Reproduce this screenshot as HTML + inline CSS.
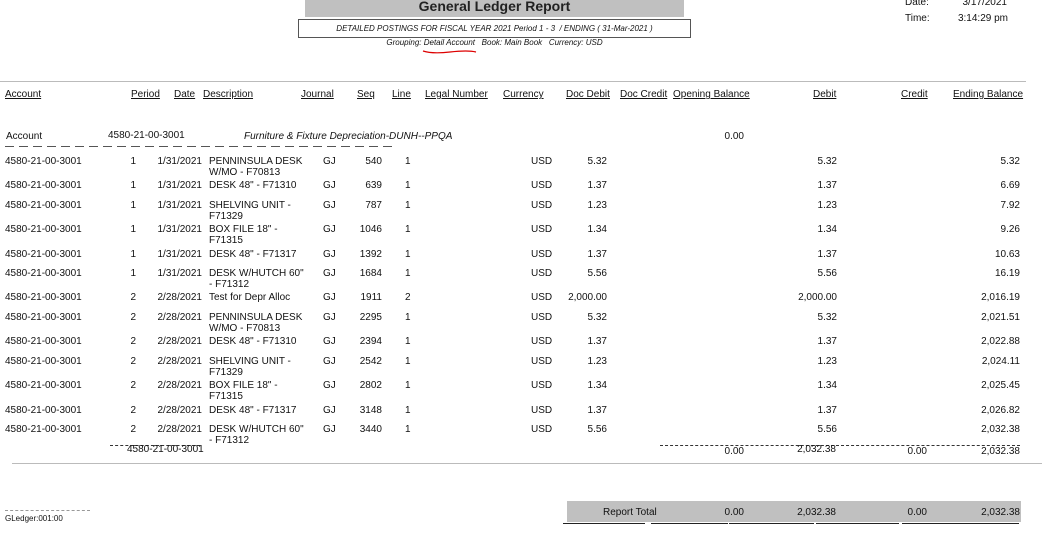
<!DOCTYPE html>
<html><head><meta charset="utf-8"><style>
body{margin:0;width:1061px;height:542px;background:#fff;position:relative;overflow:hidden;font-family:"Liberation Sans Narrow","Liberation Sans",sans-serif;font-size:10px;color:#111;}
div,span{position:absolute;white-space:nowrap;}
#w{left:0;top:2px;width:1061px;height:540px;}
.h{top:87px;text-decoration:underline;}
.r{left:0;width:1061px;height:24px;}
.r span{top:0;line-height:11px;}
.a{left:5px}.p{right:925px}.d{right:859px}.ds{left:209px;white-space:normal!important;width:96px}
.j{left:323px}.s{right:679px}.l{left:405px}.c{left:531px}.dd{right:454px}.db{right:224px}.e{right:41px}
.dash{border-top:1px dashed #333;height:0}
.ld{height:1px;background:repeating-linear-gradient(90deg,#555 0 9px,transparent 9px 14px)}
</style></head><body>
<div style="left:305px;top:0;width:379px;height:17px;background:#c0c0c0;text-align:center;font-size:14px;line-height:12px;font-weight:bold;font-family:'Liberation Sans',sans-serif;color:#222">General Ledger Report</div>
<div style="left:298px;top:19px;width:391px;height:17px;border:1px solid #555;text-align:center;font-style:italic;font-size:8px;line-height:18px;">DETAILED POSTINGS FOR FISCAL YEAR 2021 Period 1 - 3 &nbsp;/ ENDING ( 31-Mar-2021 )</div>
<div style="left:298px;top:38px;width:393px;text-align:center;font-style:italic;font-size:8px;">Grouping: Detail Account &nbsp; Book: Main Book &nbsp; Currency: USD</div>
<svg style="position:absolute;left:420px;top:49px" width="60" height="6"><path d="M3 2 Q12 5 30 3 T56 3" stroke="#d00" stroke-width="1.2" fill="none"/></svg>
<div style="left:905px;top:-3px">Date:</div><div style="right:54px;top:-3px">3/17/2021</div>
<div style="left:905px;top:13px">Time:</div><div style="right:53px;top:13px">3:14:29 pm</div>
<div style="left:0;top:81px;width:1026px;border-top:1px solid #bbb"></div>
<div id="w">
<span class="h" style="left:5px">Account</span><span class="h" style="left:131px">Period</span><span class="h" style="left:174px">Date</span><span class="h" style="left:203px">Description</span><span class="h" style="left:301px">Journal</span><span class="h" style="left:357px">Seq</span><span class="h" style="left:392px">Line</span><span class="h" style="left:425px">Legal Number</span><span class="h" style="left:503px">Currency</span><span class="h" style="left:566px">Doc Debit</span><span class="h" style="left:620px">Doc Credit</span><span class="h" style="left:673px">Opening Balance</span><span class="h" style="left:813px">Debit</span><span class="h" style="left:901px">Credit</span><span class="h" style="left:953px">Ending Balance</span>
<div style="left:6px;top:129px">Account</div><div style="left:108px;top:128px">4580-21-00-3001</div><div style="left:244px;top:129px;font-style:italic">Furniture &amp; Fixture Depreciation-DUNH--PPQA</div><div style="right:317px;top:129px">0.00</div>
<div class="ld" style="left:5px;top:144px;width:388px"></div>

<div class="r" style="top:154px"><span class="a">4580-21-00-3001</span><span class="p">1</span><span class="d">1/31/2021</span><span class="ds">PENNINSULA DESK W/MO - F70813</span><span class="j">GJ</span><span class="s">540</span><span class="l">1</span><span class="c">USD</span><span class="dd">5.32</span><span class="db">5.32</span><span class="e">5.32</span></div>
<div class="r" style="top:178px"><span class="a">4580-21-00-3001</span><span class="p">1</span><span class="d">1/31/2021</span><span class="ds">DESK 48" - F71310</span><span class="j">GJ</span><span class="s">639</span><span class="l">1</span><span class="c">USD</span><span class="dd">1.37</span><span class="db">1.37</span><span class="e">6.69</span></div>
<div class="r" style="top:198px"><span class="a">4580-21-00-3001</span><span class="p">1</span><span class="d">1/31/2021</span><span class="ds">SHELVING UNIT - F71329</span><span class="j">GJ</span><span class="s">787</span><span class="l">1</span><span class="c">USD</span><span class="dd">1.23</span><span class="db">1.23</span><span class="e">7.92</span></div>
<div class="r" style="top:222px"><span class="a">4580-21-00-3001</span><span class="p">1</span><span class="d">1/31/2021</span><span class="ds">BOX FILE 18" - F71315</span><span class="j">GJ</span><span class="s">1046</span><span class="l">1</span><span class="c">USD</span><span class="dd">1.34</span><span class="db">1.34</span><span class="e">9.26</span></div>
<div class="r" style="top:247px"><span class="a">4580-21-00-3001</span><span class="p">1</span><span class="d">1/31/2021</span><span class="ds">DESK 48" - F71317</span><span class="j">GJ</span><span class="s">1392</span><span class="l">1</span><span class="c">USD</span><span class="dd">1.37</span><span class="db">1.37</span><span class="e">10.63</span></div>
<div class="r" style="top:266px"><span class="a">4580-21-00-3001</span><span class="p">1</span><span class="d">1/31/2021</span><span class="ds">DESK W/HUTCH 60" - F71312</span><span class="j">GJ</span><span class="s">1684</span><span class="l">1</span><span class="c">USD</span><span class="dd">5.56</span><span class="db">5.56</span><span class="e">16.19</span></div>
<div class="r" style="top:290px"><span class="a">4580-21-00-3001</span><span class="p">2</span><span class="d">2/28/2021</span><span class="ds">Test for Depr Alloc</span><span class="j">GJ</span><span class="s">1911</span><span class="l">2</span><span class="c">USD</span><span class="dd">2,000.00</span><span class="db">2,000.00</span><span class="e">2,016.19</span></div>
<div class="r" style="top:310px"><span class="a">4580-21-00-3001</span><span class="p">2</span><span class="d">2/28/2021</span><span class="ds">PENNINSULA DESK W/MO - F70813</span><span class="j">GJ</span><span class="s">2295</span><span class="l">1</span><span class="c">USD</span><span class="dd">5.32</span><span class="db">5.32</span><span class="e">2,021.51</span></div>
<div class="r" style="top:334px"><span class="a">4580-21-00-3001</span><span class="p">2</span><span class="d">2/28/2021</span><span class="ds">DESK 48" - F71310</span><span class="j">GJ</span><span class="s">2394</span><span class="l">1</span><span class="c">USD</span><span class="dd">1.37</span><span class="db">1.37</span><span class="e">2,022.88</span></div>
<div class="r" style="top:354px"><span class="a">4580-21-00-3001</span><span class="p">2</span><span class="d">2/28/2021</span><span class="ds">SHELVING UNIT - F71329</span><span class="j">GJ</span><span class="s">2542</span><span class="l">1</span><span class="c">USD</span><span class="dd">1.23</span><span class="db">1.23</span><span class="e">2,024.11</span></div>
<div class="r" style="top:378px"><span class="a">4580-21-00-3001</span><span class="p">2</span><span class="d">2/28/2021</span><span class="ds">BOX FILE 18" - F71315</span><span class="j">GJ</span><span class="s">2802</span><span class="l">1</span><span class="c">USD</span><span class="dd">1.34</span><span class="db">1.34</span><span class="e">2,025.45</span></div>
<div class="r" style="top:403px"><span class="a">4580-21-00-3001</span><span class="p">2</span><span class="d">2/28/2021</span><span class="ds">DESK 48" - F71317</span><span class="j">GJ</span><span class="s">3148</span><span class="l">1</span><span class="c">USD</span><span class="dd">1.37</span><span class="db">1.37</span><span class="e">2,026.82</span></div>
<div class="r" style="top:422px"><span class="a">4580-21-00-3001</span><span class="p">2</span><span class="d">2/28/2021</span><span class="ds">DESK W/HUTCH 60" - F71312</span><span class="j">GJ</span><span class="s">3440</span><span class="l">1</span><span class="c">USD</span><span class="dd">5.56</span><span class="db">5.56</span><span class="e">2,032.38</span></div>

<div class="dash" style="left:110px;top:443px;width:90px"></div>
<div class="dash" style="left:660px;top:443px;width:360px"></div>
<div style="left:127px;top:442px">4580-21-00-3001</div>
<div style="right:317px;top:444px">0.00</div><div style="right:225px;top:442px">2,032.38</div><div style="right:134px;top:444px">0.00</div><div style="right:41px;top:444px">2,032.38</div>
<div style="left:12px;top:461px;width:1030px;border-top:1px solid #bbb"></div>

<div class="dash" style="left:5px;top:508px;width:85px;border-top-color:#999"></div>
<div style="left:5px;top:512px;font-size:8px">GLedger:001:00</div>
<div style="left:567px;top:499px;width:454px;height:21px;background:#c0c0c0"></div>
<div style="left:603px;top:505px">Report Total</div>
<div style="right:317px;top:505px">0.00</div><div style="right:225px;top:505px">2,032.38</div><div style="right:134px;top:505px">0.00</div><div style="right:41px;top:505px">2,032.38</div>
<div style="left:563px;top:521px;width:82px;border-top:1px solid #222"></div>
<div style="left:651px;top:521px;width:77px;border-top:1px solid #222"></div>
<div style="left:729px;top:521px;width:85px;border-top:1px solid #222"></div>
<div style="left:816px;top:521px;width:83px;border-top:1px solid #222"></div>
<div style="left:902px;top:521px;width:117px;border-top:1px solid #222"></div>
</div>
</body></html>
